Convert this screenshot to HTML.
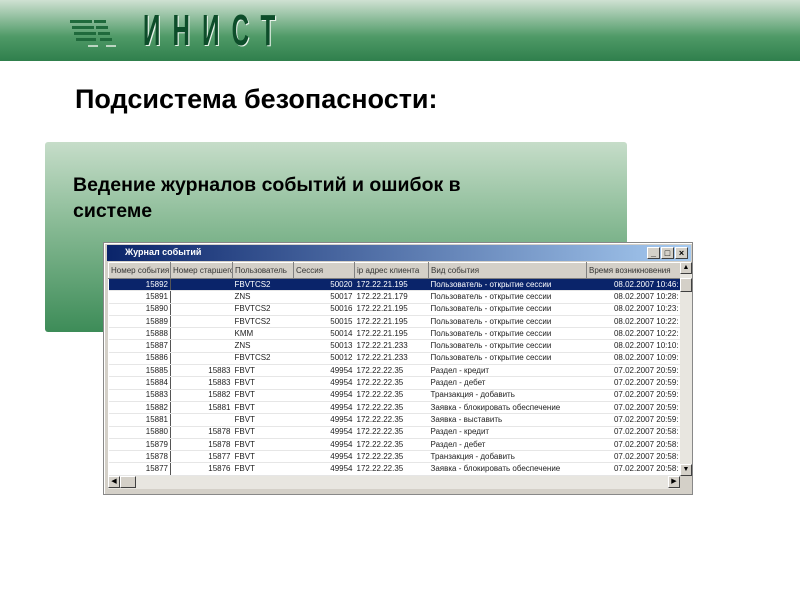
<!DOCTYPE html>
<html><head><meta charset="utf-8"><style>
*{margin:0;padding:0;box-sizing:border-box}
body{width:800px;height:600px;background:#fff;position:relative;overflow:hidden;font-family:"Liberation Sans","DejaVu Sans",sans-serif}
.hdr{position:absolute;left:0;top:0;width:800px;height:61px;background:linear-gradient(#cfe1d2,#4f9a67 60%,#2f7f4c)}
.logo{position:absolute;left:143px;top:6px;font-family:"Liberation Sans Narrow","Liberation Sans",sans-serif;font-weight:bold;font-size:44px;color:#0d4d2a;letter-spacing:22px;transform:scaleX(.55);transform-origin:left;text-shadow:2px 1px 0 #e8f2ea}
h1{position:absolute;left:75px;top:84px;font-size:27px;font-weight:bold;color:#000}
.box{position:absolute;left:45px;top:142px;width:582px;height:190px;border-radius:3px;background:linear-gradient(#c6ddc9,#86b993 45%,#3d8c58)}
.box p{position:absolute;left:28px;top:30px;font-size:19.5px;font-weight:bold;line-height:26px;color:#000;width:440px}
.win{position:absolute;left:103px;top:242px;width:590px;height:253px;background:#d4d0c8;border:1px solid #888;box-shadow:inset 1px 1px #fff}
.tb{position:absolute;left:3px;top:2px;width:584px;height:16px;background:linear-gradient(90deg,#0a246a,#a6caf0);color:#fff;font-size:9px;font-weight:bold;padding:2px 18px}
.btns{position:absolute;right:3px;top:2px;display:flex;gap:1px}
.btns span{width:13px;height:12px;background:#d4d0c8;border:1px solid;border-color:#fff #404040 #404040 #fff;font-size:9px;line-height:10px;text-align:center;color:#000}
.grid{position:absolute;left:4px;top:19px;width:572px;height:214px;background:#fff;overflow:hidden;font-size:8px;color:#222}
table{border-collapse:collapse;table-layout:fixed;width:572px}
tr{height:12.3px}
td,th{white-space:nowrap;overflow:hidden;padding:0 2px;font-weight:normal;line-height:10px;border-bottom:1px solid #e6e6e6}
th{background:#d4d0c8;border:1px solid;border-color:#fff #808080 #808080 #fff;height:16px;text-align:left;color:#333}
td.r{text-align:right}
td:first-child{border-right:1px solid #555}
tr.sel td{background:#0a246a;color:#fff}
.vs{position:absolute;left:576px;top:19px;width:12px;height:214px;background:#e8e6e0}
.hs{position:absolute;left:4px;top:233px;width:572px;height:13px;background:#e8e6e0}
.sb{position:absolute;width:12px;height:12px;background:#d4d0c8;border:1px solid;border-color:#fff #404040 #404040 #fff;font-size:7px;text-align:center;line-height:10px}
</style></head><body>
<div class="hdr">
<svg style="position:absolute;left:68px;top:18px" width="56" height="34"><g fill="#1f6a3c"><rect x="2" y="2" width="22" height="3"/><rect x="4" y="8" width="22" height="3"/><rect x="6" y="14" width="22" height="3"/><rect x="8" y="20" width="20" height="3"/><rect x="26" y="2" width="12" height="3"/><rect x="28" y="8" width="12" height="3"/><rect x="30" y="14" width="12" height="3"/><rect x="32" y="20" width="12" height="3"/></g><g fill="#bcd6c2"><rect x="20" y="27" width="10" height="2"/><rect x="38" y="27" width="10" height="2"/></g></svg>
<div class="logo">ИНИСТ</div></div>
<h1>Подсистема безопасности:</h1>
<div class="box"><p>Ведение журналов событий и ошибок в системе</p></div>
<div class="win">
<div class="tb">Журнал событий<div class="btns"><span>_</span><span>□</span><span>×</span></div></div>
<div class="grid"><table>
<colgroup><col style="width:62px"><col style="width:62px"><col style="width:61px"><col style="width:61px"><col style="width:74px"><col style="width:158px"><col style="width:94px"></colgroup>
<tr><th>Номер события</th><th>Номер старшего</th><th>Пользователь</th><th>Сессия</th><th>ip адрес клиента</th><th>Вид события</th><th>Время возникновения</th></tr>
<tr class="sel"><td class="r">15892</td><td></td><td>FBVTCS2</td><td class="r">50020</td><td>172.22.21.195</td><td>Пользователь - открытие сессии</td><td class="r">08.02.2007 10:46:</td></tr>
<tr><td class="r">15891</td><td></td><td>ZNS</td><td class="r">50017</td><td>172.22.21.179</td><td>Пользователь - открытие сессии</td><td class="r">08.02.2007 10:28:</td></tr>
<tr><td class="r">15890</td><td></td><td>FBVTCS2</td><td class="r">50016</td><td>172.22.21.195</td><td>Пользователь - открытие сессии</td><td class="r">08.02.2007 10:23:</td></tr>
<tr><td class="r">15889</td><td></td><td>FBVTCS2</td><td class="r">50015</td><td>172.22.21.195</td><td>Пользователь - открытие сессии</td><td class="r">08.02.2007 10:22:</td></tr>
<tr><td class="r">15888</td><td></td><td>KMM</td><td class="r">50014</td><td>172.22.21.195</td><td>Пользователь - открытие сессии</td><td class="r">08.02.2007 10:22:</td></tr>
<tr><td class="r">15887</td><td></td><td>ZNS</td><td class="r">50013</td><td>172.22.21.233</td><td>Пользователь - открытие сессии</td><td class="r">08.02.2007 10:10:</td></tr>
<tr><td class="r">15886</td><td></td><td>FBVTCS2</td><td class="r">50012</td><td>172.22.21.233</td><td>Пользователь - открытие сессии</td><td class="r">08.02.2007 10:09:</td></tr>
<tr><td class="r">15885</td><td class="r">15883</td><td>FBVT</td><td class="r">49954</td><td>172.22.22.35</td><td>Раздел - кредит</td><td class="r">07.02.2007 20:59:</td></tr>
<tr><td class="r">15884</td><td class="r">15883</td><td>FBVT</td><td class="r">49954</td><td>172.22.22.35</td><td>Раздел - дебет</td><td class="r">07.02.2007 20:59:</td></tr>
<tr><td class="r">15883</td><td class="r">15882</td><td>FBVT</td><td class="r">49954</td><td>172.22.22.35</td><td>Транзакция - добавить</td><td class="r">07.02.2007 20:59:</td></tr>
<tr><td class="r">15882</td><td class="r">15881</td><td>FBVT</td><td class="r">49954</td><td>172.22.22.35</td><td>Заявка - блокировать обеспечение</td><td class="r">07.02.2007 20:59:</td></tr>
<tr><td class="r">15881</td><td></td><td>FBVT</td><td class="r">49954</td><td>172.22.22.35</td><td>Заявка - выставить</td><td class="r">07.02.2007 20:59:</td></tr>
<tr><td class="r">15880</td><td class="r">15878</td><td>FBVT</td><td class="r">49954</td><td>172.22.22.35</td><td>Раздел - кредит</td><td class="r">07.02.2007 20:58:</td></tr>
<tr><td class="r">15879</td><td class="r">15878</td><td>FBVT</td><td class="r">49954</td><td>172.22.22.35</td><td>Раздел - дебет</td><td class="r">07.02.2007 20:58:</td></tr>
<tr><td class="r">15878</td><td class="r">15877</td><td>FBVT</td><td class="r">49954</td><td>172.22.22.35</td><td>Транзакция - добавить</td><td class="r">07.02.2007 20:58:</td></tr>
<tr><td class="r">15877</td><td class="r">15876</td><td>FBVT</td><td class="r">49954</td><td>172.22.22.35</td><td>Заявка - блокировать обеспечение</td><td class="r">07.02.2007 20:58:</td></tr>
</table></div>
<div class="vs"><div class="sb" style="top:0;left:0">▲</div><div class="sb" style="top:16px;left:0;height:14px"></div><div class="sb" style="bottom:0;left:0">▼</div></div>
<div class="hs"><div class="sb" style="left:0;top:0">◀</div><div class="sb" style="left:12px;top:0;width:16px"></div><div class="sb" style="right:0;top:0">▶</div></div>
</div>
</body></html>
